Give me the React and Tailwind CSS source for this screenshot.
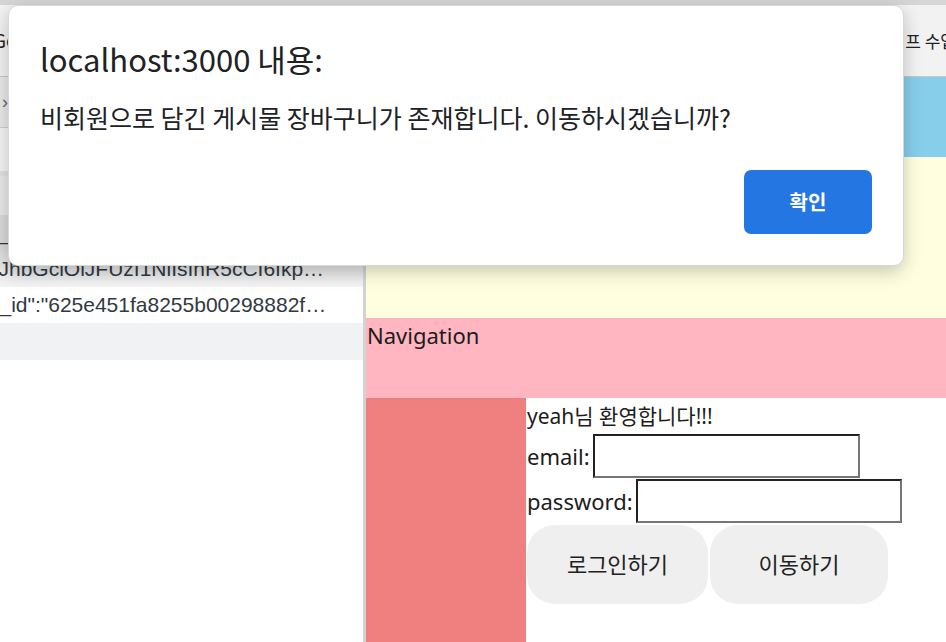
import React from "react";

const pageFont = { fontFamily: '"Noto Sans", "Noto Sans CJK KR", sans-serif' };

function DevtoolsPanel() {
    return (
        <aside className="w-[366px] shrink-0 flex flex-col border-r-[3px] border-[#d3d3d3] bg-white text-[#303942] overflow-hidden"
            style={{ fontFamily: '"Liberation Sans", "Noto Sans CJK KR", sans-serif' }}>
            <div className="h-[51px] bg-[#e9e9e9] border-b border-[#cfcfcf] flex items-center pl-[2px] text-[#666] text-[18px]">›</div>
            <div className="h-[48px] bg-[#f5f5f5] border-b-[5px] border-[#e1e1e1]" />
            <div className="h-[39px] bg-[#e9e9e9]" />
            <div className="h-[35px] bg-[#dadada] flex items-center whitespace-nowrap text-[20px]">_id</div>
            <div className="h-[37px] bg-gradient-to-b from-[#dcdcdc] to-[#f3f3f3] flex items-center whitespace-nowrap text-[21px]">
                <span className="-ml-[12px]">yJhbGciOiJFUzI1NiIsInR5cCI6Ikp…</span>
            </div>
            <div className="h-[36px] bg-white flex items-center whitespace-nowrap text-[21px]">
                <span className="-ml-[8px]">{'"_id":"625e451fa8255b00298882f…'}</span>
            </div>
            <div className="h-[37px] bg-[#f1f2f4]" />
            <div className="flex-1 bg-white" />
        </aside>
    );
}

function LoginPage() {
    return (
        <main className="flex-1 flex flex-col text-[#1c1c1c]" style={pageFont}>
            <div className="h-[80px] bg-[#87ceeb]" />
            <div className="h-[161px] bg-[#ffffe0]" />
            <div className="h-[80px] bg-[#ffb6c1] text-[22px] leading-[30px] pl-[1px] pt-[2px]">Navigation</div>
            <div className="flex-1 flex">
                <div className="w-[160px] bg-[#f08080]" />
                <div className="flex-1 pl-[1px] pt-[3px] text-[21px]">
                    <div className="leading-[30px]">yeah님 환영합니다!!!</div>
                    <div className="flex items-center h-[44px] mt-[3px]">
                        <span className="mr-[3px] text-[22px]">email:</span>
                        <input className="w-[267px] h-[44px] border-2 border-t-[#222] border-l-[#222] border-b-[#767676] border-r-[#767676] bg-white outline-none" />
                    </div>
                    <div className="flex items-center h-[44px] mt-[1px]">
                        <span className="mr-[3px] text-[22px]">password:</span>
                        <input className="w-[266px] h-[44px] border-2 border-t-[#222] border-l-[#222] border-b-[#767676] border-r-[#767676] bg-white outline-none" />
                    </div>
                    <div className="flex gap-[2px] mt-[2px]">
                        <button className="w-[181px] h-[79px] rounded-[28px] bg-[#efefef] text-[22px] text-[#222]">로그인하기</button>
                        <button className="w-[178px] h-[79px] rounded-[28px] bg-[#efefef] text-[22px] text-[#222]">이동하기</button>
                    </div>
                </div>
            </div>
        </main>
    );
}

function AlertDialog() {
    return (
        <div className="absolute left-[8px] top-[5px] w-[896px] h-[261px] bg-white rounded-[10px] border border-[#d8d8d8] shadow-[0_6px_18px_rgba(0,0,0,0.22)] flex flex-col pl-[31px] pr-[31px]"
            style={{ fontFamily: '"Noto Sans CJK KR", "Noto Sans", sans-serif' }}>
            <div className="mt-[34px] text-[31px] leading-[38px] text-[#202124]">localhost:3000 내용:</div>
            <div className="mt-[22px] text-[25px] leading-[34px] text-[#202124] whitespace-nowrap">비회원으로 담긴 게시물 장바구니가 존재합니다. 이동하시겠습니까?</div>
            <div className="flex justify-end mt-[36px]">
                <button className="w-[128px] h-[64px] rounded-[7px] bg-[#2477e3] text-white text-[20px] font-bold">확인</button>
            </div>
        </div>
    );
}

export default function App() {
    return (
        <div className="relative w-[946px] h-[642px] overflow-hidden bg-white">
            <div className="h-[5px] bg-[#d5d5d5]" />
            <div className="h-[72px] bg-[#f2f2f2] border-b border-[#c8c8c8] flex items-center justify-between text-[#222]"
                style={{ fontFamily: '"Noto Sans CJK KR", sans-serif' }}>
                <span className="text-[19px] -ml-[7px]">Go</span>
                <span className="text-[17px] -mr-[10px] whitespace-nowrap">코드캠프 수업</span>
            </div>
            <div className="flex h-[565px]">
                <DevtoolsPanel />
                <LoginPage />
            </div>
            <AlertDialog />
        </div>
    );
}
